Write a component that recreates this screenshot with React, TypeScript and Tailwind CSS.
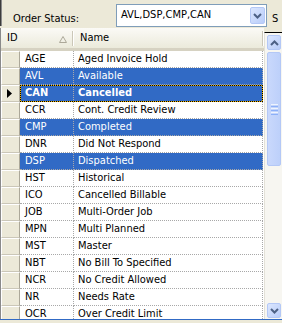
import clsx from "clsx";

interface Status {
  id: string;
  name: string;
  sel?: boolean;
  current?: boolean;
}

const rows: Status[] = [
  { id: "AGE", name: "Aged Invoice Hold" },
  { id: "AVL", name: "Available", sel: true },
  { id: "CAN", name: "Cancelled", sel: true, current: true },
  { id: "CCR", name: "Cont. Credit Review" },
  { id: "CMP", name: "Completed", sel: true },
  { id: "DNR", name: "Did Not Respond" },
  { id: "DSP", name: "Dispatched", sel: true },
  { id: "HST", name: "Historical" },
  { id: "ICO", name: "Cancelled Billable" },
  { id: "JOB", name: "Multi-Order Job" },
  { id: "MPN", name: "Multi Planned" },
  { id: "MST", name: "Master" },
  { id: "NBT", name: "No Bill To Specified" },
  { id: "NCR", name: "No Credit Allowed" },
  { id: "NR", name: "Needs Rate" },
  { id: "OCR", name: "Over Credit Limit" },
];

const Chevron = ({ up }: { up?: boolean }) => (
  <svg width="9" height="6" viewBox="0 0 9 6">
    <path
      d={up ? "M1 5 L4.5 1.5 L8 5" : "M1 1 L4.5 4.5 L8 1"}
      fill="none"
      stroke="#4d6185"
      strokeWidth="2"
    />
  </svg>
);

const XpButton = ({ up, className }: { up?: boolean; className?: string }) => (
  <div
    className={clsx(
      "flex items-center justify-center rounded-[2px] border border-[#b4c8f6] bg-gradient-to-br from-[#dbe6fe] to-[#b9cdf9]",
      className
    )}
  >
    <Chevron up={up} />
  </div>
);

const Row = ({ row }: { row: Status }) => (
  <div className="flex h-[17px] shrink-0">
    <div className="flex w-[19px] items-center border-t border-l border-r border-b border-t-white border-l-white border-r-[#aca899] border-b-[#cbc7b8] bg-[#ece9d8] pl-[5px]">
      {row.current && (
        <svg width="5" height="9" viewBox="0 0 5 9">
          <path d="M0 0 L5 4.5 L0 9 Z" fill="#000" />
        </svg>
      )}
    </div>
    <div
      className={clsx(
        "relative flex",
        row.sel ? "bg-[#316ac5] text-white" : "bg-white text-black",
        row.current && "font-bold"
      )}
    >
      <div className="w-[54px] border-r border-b border-dotted border-[#a8a8a8] pl-[5px] leading-[16px]">
        {row.id}
      </div>
      <div className="w-[189px] border-r border-b border-dotted border-[#a8a8a8] pl-[4px] leading-[16px] whitespace-nowrap">
        {row.name}
      </div>
      {row.current && (
        <>
          <div className="absolute inset-0 border border-[#f0b400]" />
          <div className="absolute inset-0 border border-dotted border-black" />
        </>
      )}
    </div>
    <div className="w-[1px] bg-white" />
  </div>
);

const HeaderCell = ({
  label,
  width,
  sort,
}: {
  label: string;
  width: string;
  sort?: boolean;
}) => (
  <div
    className={clsx(
      "relative flex h-full items-center border-b-[3px] border-[#d6d2c2] bg-gradient-to-b from-[#fbfaf6] to-[#ebeadb] pl-[6px]",
      width
    )}
  >
    <span>{label}</span>
    {sort && (
      <svg className="absolute left-[58px] top-[8px]" width="8" height="7" viewBox="0 0 8 7">
        <path d="M0.5 6.5 L4 0.5 L7.5 6.5 Z" fill="none" stroke="#aca899" />
      </svg>
    )}
    <div className="absolute right-0 top-[3px] bottom-[2px] w-[2px] border-l border-[#cbc7b8] bg-white" />
  </div>
);

export default function App() {
  return (
    <div className="relative h-[323px] w-[282px] overflow-hidden bg-[#ece9d8] font-['DejaVu_Sans_Condensed','Liberation_Sans',sans-serif] text-[11px] text-black">
      {/* filter bar */}
      <div className="flex h-[28px] items-start">
        <div className="h-[26px] w-[2px] border-r border-[#8a8a8a] bg-[#3c3c3c]" />
        <div className="w-[114px] pl-[11px] pt-[12px] leading-[13px]">Order Status:</div>
        <div className="mt-[4px] flex h-[23px] w-[151px] items-center border border-[#7f9db9] bg-white pl-[4px] pr-[1px]">
          <span className="flex-1">AVL,DSP,CMP,CAN</span>
          <XpButton className="h-[17px] w-[15px]" />
        </div>
        <div className="pl-[5px] pt-[12px] leading-[13px]">S</div>
      </div>

      {/* grid */}
      <div className="flex h-[292px] border-b border-[#316ac5]">
        <div className="flex w-[264px] flex-col border-l border-[#8a8a8a] bg-white">
          <div className="flex h-[23px] shrink-0">
            <HeaderCell label="ID" width="w-[73px]" sort />
            <HeaderCell label="Name" width="w-[190px]" />
          </div>
          <div className="flex flex-col overflow-hidden">
            {rows.map((row) => (
              <Row key={row.id} row={row} />
            ))}
          </div>
        </div>

        {/* scrollbar */}
        <div className="flex w-[18px] flex-col">
          <div className="h-[4px] bg-[#ece9d8]" />
          <div className="flex flex-1 flex-col border-t border-l border-t-black border-l-[#e3e1d8] bg-[#f7f6f1] pl-[2px] pr-[1px] pt-[2px]">
            <XpButton up className="h-[15px] w-[14px]" />
            <div className="mt-[2px] flex h-[114px] w-[14px] flex-col items-center justify-center gap-[1px] rounded-[2px] border border-[#b4c8f6] bg-gradient-to-r from-[#c9d8fc] to-[#bdd0fa]">
              <div className="h-[1px] w-[7px] bg-[#eef4fe]" />
              <div className="h-[1px] w-[7px] bg-[#8cb0f8]" />
              <div className="h-[1px] w-[7px] bg-[#eef4fe]" />
              <div className="h-[1px] w-[7px] bg-[#8cb0f8]" />
              <div className="h-[1px] w-[7px] bg-[#eef4fe]" />
              <div className="h-[1px] w-[7px] bg-[#8cb0f8]" />
            </div>
            <div className="flex-1" />
            <XpButton className="mb-[1px] h-[15px] w-[14px]" />
          </div>
        </div>
      </div>
    </div>
  );
}
